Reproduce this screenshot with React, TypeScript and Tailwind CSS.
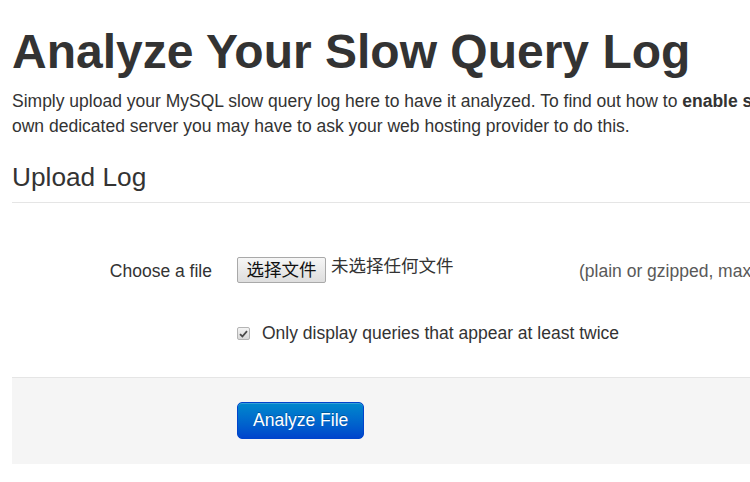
import React from 'react';

const sans = "font-['Liberation_Sans','Noto_Sans_CJK_SC',Arial,sans-serif]";

function FakeFileInput() {
  return (
    <div className="flex items-start w-[337px] pt-[4.5px]">
      <button
        type="button"
        className="h-[26px] w-[89px] border border-[#a9a9a9] rounded-[2px] bg-gradient-to-b from-[#f6f6f6] to-[#dedede] text-[17.5px] leading-[24px] text-[#111] px-0"
      >
        选择文件
      </button>
      <span className="ml-[5px] text-[17.5px] leading-[18px] text-[#333]">未选择任何文件</span>
    </div>
  );
}

function FakeCheckbox() {
  return (
    <span className="absolute left-0 top-[6px] w-[13px] h-[13px] rounded-[2px] border border-[#b4b4b4] bg-gradient-to-b from-[#f4f4f4] to-[#d8d8d8] flex items-center justify-center">
      <svg width="9" height="8" viewBox="0 0 9 8">
        <path d="M1 4.2 L3.4 6.5 L8 1.2" fill="none" stroke="#4a4a4a" strokeWidth="1.8" />
      </svg>
    </span>
  );
}

export default function App() {
  return (
    <div className={`w-[750px] h-[482px] overflow-hidden bg-white text-[#333] ${sans}`}>
      <div className="w-[1175px] pl-[12px] pt-[14px]">
        <h1 className="text-[48px] leading-[50px] font-bold my-[12.5px]">
          Analyze Your Slow Query Log
        </h1>
        <p className="text-[17.5px] leading-[25px] mb-[12.5px] whitespace-nowrap">
          Simply upload your MySQL slow query log here to have it analyzed. To find out how to{' '}
          <b>enable slow query logging</b>, see our guide. If you don't have your
          <br />
          own dedicated server you may have to ask your web hosting provider to do this.
        </p>

        <form onSubmit={(e) => e.preventDefault()}>
          <div className="text-[26.25px] leading-[50px] border-b border-[#e5e5e5]">Upload Log</div>

          <div className="pt-[50px]">
            <div className="flex min-h-[43.5px] mb-[25px] text-[17.5px] leading-[25px]">
              <div className="w-[200px] text-right pt-[6.25px]">Choose a file</div>
              <div className="ml-[25px] flex items-start">
                <FakeFileInput />
                <span className="pt-[6.25px] pl-[5px] text-[#595959]">(plain or gzipped, max. 50 MB)</span>
              </div>
            </div>

            <div className="flex text-[17.5px] leading-[25px]">
              <div className="ml-[225px] relative pl-[25px] pt-[6.25px]">
                <FakeCheckbox />
                <span className="relative -top-[6px]">Only display queries that appear at least twice</span>
              </div>
            </div>
          </div>

          <div className="bg-[#f5f5f5] border-t border-[#e5e5e5] mt-[25px] pt-[23.75px] pb-[25px] pl-[225px]">
            <button
              type="submit"
              className="h-[37px] px-[15px] text-[17.5px] leading-[25px] text-white rounded-[5px] border border-[#0044cc] bg-gradient-to-b from-[#0088cc] to-[#0044cc] [text-shadow:0_-1px_0_rgba(0,0,0,0.25)] shadow-[inset_0_1px_0_rgba(255,255,255,0.2)]"
            >
              Analyze File
            </button>
          </div>
        </form>
      </div>
    </div>
  );
}
